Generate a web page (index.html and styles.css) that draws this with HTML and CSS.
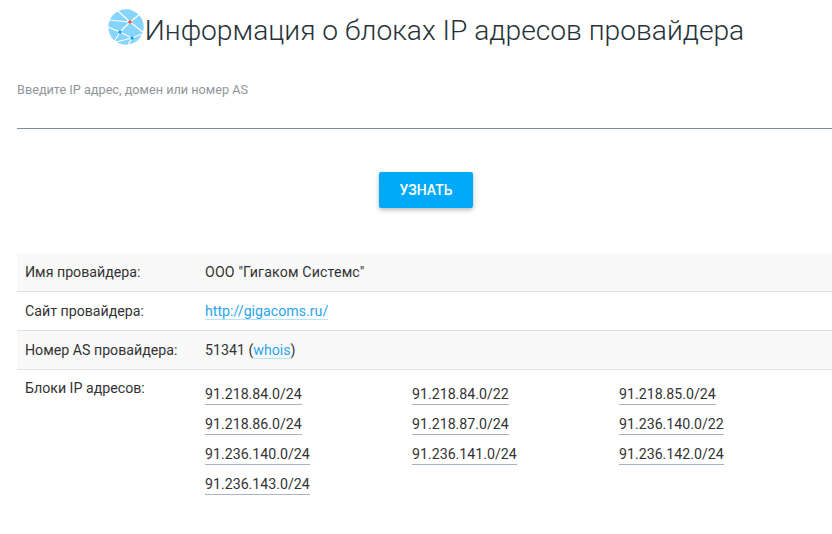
FILE: index.html
```html
<!DOCTYPE html>
<html lang="ru">
<head>
<meta charset="utf-8">
<title>Информация о блоках IP адресов провайдера</title>
<link rel="stylesheet" href="styles.css">
</head>
<body>
<main class="page">
  <h1 class="title">
    <svg class="logo" width="36" height="36" viewBox="0 0 36 36" aria-hidden="true">
      <circle cx="18" cy="18" r="17.7" fill="#85d4fc"/>
      <g fill="none" stroke="#fff" stroke-width="1.2">
        <path d="M9 1 L22 13"/>
        <path d="M0 11 L22 13"/>
        <path d="M22 13 L32 5"/>
        <path d="M22 13 L12 23"/>
        <path d="M22 13 L36 24"/>
        <path d="M0 18 L12 23"/>
        <path d="M12 23 L24 29"/>
        <path d="M12 23 L6 33"/>
        <path d="M8 33 L24 29"/>
        <path d="M24 29 L34 25"/>
        <path d="M24 29 L20 36"/>
      </g>
      <circle cx="22" cy="13" r="1.8" fill="#f4553c"/>
      <circle cx="12" cy="23" r="1.6" fill="#0a97ea"/>
      <circle cx="24" cy="29" r="1.6" fill="#0a97ea"/>
    </svg>
    <span>Информация о блоках IP адресов провайдера</span>
  </h1>

  <label class="field">
    <span class="field-label">Введите IP адрес, домен или номер AS</span>
  </label>

  <div class="actions">
    <button class="btn" type="button">УЗНАТЬ</button>
  </div>

  <div class="info">
    <div class="row">
      <div class="key">Имя провайдера:</div>
      <div class="val val-name">ООО "Гигаком Системс"</div>
    </div>
    <div class="row">
      <div class="key">Сайт провайдера:</div>
      <div class="val"><a class="link" href="#">http://gigacoms.ru/</a></div>
    </div>
    <div class="row">
      <div class="key">Номер AS провайдера:</div>
      <div class="val">51341 (<a class="link" href="#">whois</a>)</div>
    </div>
    <div class="row row-blocks">
      <div class="key">Блоки IP адресов:</div>
      <div class="blocks">
        <div class="cell"><a class="ip" href="#">91.218.84.0/24</a></div>
        <div class="cell"><a class="ip" href="#">91.218.84.0/22</a></div>
        <div class="cell"><a class="ip" href="#">91.218.85.0/24</a></div>
        <div class="cell"><a class="ip" href="#">91.218.86.0/24</a></div>
        <div class="cell"><a class="ip" href="#">91.218.87.0/24</a></div>
        <div class="cell"><a class="ip" href="#">91.236.140.0/22</a></div>
        <div class="cell"><a class="ip" href="#">91.236.140.0/24</a></div>
        <div class="cell"><a class="ip" href="#">91.236.141.0/24</a></div>
        <div class="cell"><a class="ip" href="#">91.236.142.0/24</a></div>
        <div class="cell"><a class="ip" href="#">91.236.143.0/24</a></div>
      </div>
    </div>
  </div>
</main>
</body>
</html>
```

FILE: styles.css
```css
* { box-sizing: border-box; }
html, body { margin: 0; padding: 0; background: #fff; overflow: hidden; }
body { font-family: Roboto, "Noto Sans", sans-serif; color: #333; font-size: 14.2px; }
.page { width: 832px; padding-left: 17px; }
.title {
  display: flex; align-items: center; justify-content: center; gap: 1px;
  margin: 0; height: 60px; padding-left: 3px;
  font-weight: 300; font-size: 28.2px; color: #263238; white-space: nowrap;
}
.logo { flex: none; margin-top: -6px; }
.field { display: block; height: 69px; padding-top: 22px; border-bottom: 1px solid #78909c; }
.field-label { font-size: 12.7px; color: #90969b; display: block; }
.actions { display: flex; justify-content: center; padding: 43px 0 0 3px; height: 124px; }
.btn {
  width: 94px; height: 36px; border: 0; border-radius: 2px; background: #03a9f9; color: #fff;
  font-family: Roboto, sans-serif; font-size: 14px; font-weight: 500;
  box-shadow: 0 2px 5px rgba(0,0,0,.28);
}
.info { display: flex; flex-direction: column; }
.row { display: flex; height: 39px; align-items: center; padding-left: 8px; border-bottom: 1px solid #e0e0e0; }
.row:nth-child(odd) { background: #f9f9f9; }
.key { width: 180px; flex: none; }
.val-name { letter-spacing: .15px; }
.link { color: #29a5ee; text-decoration: none; border-bottom: 1px solid #b3e5fc; }
.row-blocks { height: auto; align-items: flex-start; border-bottom: 0; padding-top: 10px; }
.blocks { display: grid; grid-template-columns: repeat(3, 207px); grid-auto-rows: 30px; padding-top: 6px; }
.ip { color: #333; text-decoration: none; border-bottom: 1px solid #a9b4c0; padding-bottom: 2px; }
```
